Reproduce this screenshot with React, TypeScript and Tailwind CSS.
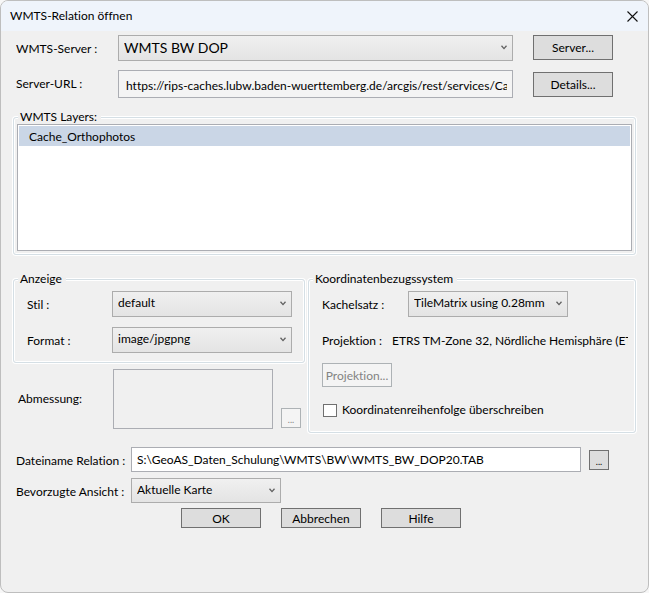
import { useState, type ReactNode } from "react";
import { twMerge } from "tailwind-merge";

type SelectBoxProps = {
  id: string;
  options: string[];
  className?: string;
  selectClassName?: string;
};

function SelectBox({ id, options, className, selectClassName }: SelectBoxProps) {
  return (
    <div className={twMerge("relative h-[26px]", className)}>
      <select
        id={id}
        className={twMerge(
          "block h-full w-full appearance-none border border-[#acacac] bg-linear-to-b from-[#f0f0f0] to-[#e4e4e4] pr-4 pb-[2px] pl-[5px] outline-none",
          selectClassName
        )}
      >
        {options.map((option) => (
          <option key={option}>{option}</option>
        ))}
      </select>
      <svg
        viewBox="0 0 6 5"
        className="pointer-events-none absolute top-[10px] right-[6px] h-[5px] w-[6px]"
        fill="none"
        stroke="#606060"
        strokeWidth="1.3"
      >
        <path d="M0.5 0.8 L3 3.6 L5.5 0.8" />
      </svg>
    </div>
  );
}

type ButtonProps = {
  children: ReactNode;
  className?: string;
  disabled?: boolean;
  label?: string;
};

function Button({ children, className, disabled, label }: ButtonProps) {
  return (
    <button
      type="button"
      disabled={disabled}
      aria-label={label}
      className={twMerge(
        "h-[25px] w-20 shrink-0 border border-[#707070] bg-[#dddddd] pt-px hover:bg-[#bee6fd] disabled:border-[#adb2b5] disabled:bg-[#f4f4f4] disabled:text-[#838383]",
        className
      )}
    >
      {children}
    </button>
  );
}

type GroupBoxProps = {
  title: string;
  className?: string;
  bodyClassName?: string;
  children: ReactNode;
};

function GroupBox({ title, className, bodyClassName, children }: GroupBoxProps) {
  return (
    <fieldset
      className={twMerge(
        "min-w-0 rounded-[3px] border border-[#d5dfe5] shadow-[0_0_0_1px_#fff,inset_0_0_0_1px_#fff]",
        className
      )}
    >
      <legend className="ml-1 bg-[#f0f0f0] pr-1 pl-[2px] leading-[14px]">{title}</legend>
      <div className={bodyClassName}>{children}</div>
    </fieldset>
  );
}

const layers = ["Cache_Orthophotos"];

function App() {
  const [selectedLayer, setSelectedLayer] = useState(layers[0]);
  const [overrideOrder, setOverrideOrder] = useState(false);

  return (
    <div className="min-h-screen bg-[#f7f7f7] font-['Lato','Open_Sans',sans-serif] text-[12px] leading-4 text-black [font-variant-ligatures:none]">
      <main className="min-h-screen overflow-hidden rounded-lg border border-[#bebebe] bg-[#f0f0f0]">
        <header className="flex h-[30px] items-center justify-between bg-[#eff4fb] pr-[10px] pl-[9px]">
          <h1>WMTS-Relation öffnen</h1>
          <button type="button" aria-label="Schließen">
            <svg viewBox="0 0 11 11" className="h-[11px] w-[11px]" fill="none" stroke="#111" strokeWidth="1.1">
              <path d="M0.5 0.5 L10.5 10.5 M10.5 0.5 L0.5 10.5" />
            </svg>
          </button>
        </header>

        <section className="flex flex-col gap-[9px] pt-1 pr-[35px] pl-[15px]">
          <div className="flex items-start">
            <label htmlFor="server" className="w-[102px] pt-[6px]">
              WMTS-Server :
            </label>
            <SelectBox id="server" options={["WMTS BW DOP"]} className="flex-1" selectClassName="pb-0 text-[14px]" />
            <Button className="ml-5">Server...</Button>
          </div>
          <div className="flex items-center">
            <label htmlFor="url" className="w-[102px]">
              Server-URL :
            </label>
            <input
              id="url"
              type="text"
              readOnly
              className="h-7 min-w-0 flex-1 border border-[#abadb3] bg-[#f4f4f4] pt-[2px] pr-[5px] pl-[7px] outline-none"
              defaultValue="https://rips-caches.lubw.baden-wuerttemberg.de/arcgis/rest/services/Cache_Orthophotos"
            />
            <Button className="ml-5">Details...</Button>
          </div>
        </section>

        <GroupBox title="WMTS Layers:" className="mx-3 mt-3" bodyClassName="px-[3px] pb-[3px]">
          <ul role="listbox" aria-label="WMTS Layers" className="h-[127px] overflow-auto border border-[#abadb3] bg-white p-px">
            {layers.map((layer) => (
              <li
                key={layer}
                role="option"
                aria-selected={layer === selectedLayer}
                onClick={() => setSelectedLayer(layer)}
                className={twMerge("h-5 pt-[3px] pl-[10px]", layer === selectedLayer && "bg-[#cad6e6]")}
              >
                {layer}
              </li>
            ))}
          </ul>
        </GroupBox>

        <div className="mx-3 mt-[17px] grid grid-cols-[73fr_82fr] gap-[3px]">
          <div>
            <GroupBox title="Anzeige" bodyClassName="flex flex-col gap-[10px] pt-[5px] pr-3 pb-[9px] pl-[13px]">
              <div className="flex items-center">
                <label htmlFor="style" className="w-[85px] pt-[2px]">
                  Stil :
                </label>
                <SelectBox id="style" options={["default"]} className="flex-1" />
              </div>
              <div className="flex items-center">
                <label htmlFor="format" className="w-[85px] pt-[2px]">
                  Format :
                </label>
                <SelectBox id="format" options={["image/jpgpng", "image/png", "image/jpeg"]} className="flex-1" />
              </div>
            </GroupBox>
            <div className="mt-[6px] flex items-center pr-1 pl-[5px]">
              <label htmlFor="dimension" className="w-[95px]">
                Abmessung:
              </label>
              <textarea
                id="dimension"
                disabled
                className="block h-[60px] min-w-0 flex-1 resize-none border border-[#abadb3] bg-[#f0f0f0]"
              />
              <Button disabled label="Abmessung wählen" className="mb-px ml-2 h-5 w-5 self-end pt-1 text-[9px] leading-3">
                ...
              </Button>
            </div>
          </div>

          <GroupBox
            title="Koordinatenbezugssystem"
            bodyClassName="flex flex-col gap-[10px] pt-[5px] pr-[7px] pb-[9px] pl-[13px]"
          >
            <div className="flex items-center">
              <label htmlFor="tileset" className="w-[86px] pt-[2px]">
                Kachelsatz :
              </label>
              <SelectBox id="tileset" options={["TileMatrix using 0.28mm"]} className="w-40" />
            </div>
            <div className="flex h-[26px] items-center pt-[2px]">
              <span className="w-[70px] shrink-0">Projektion :</span>
              <span className="overflow-hidden whitespace-nowrap">ETRS TM-Zone 32, Nördliche Hemisphäre (ETRS89)</span>
            </div>
            <Button disabled className="h-6 w-[70px]">
              Projektion...
            </Button>
            <label className="flex h-[26px] items-center gap-[5px] pl-px">
              <input
                type="checkbox"
                checked={overrideOrder}
                onChange={(event) => setOverrideOrder(event.target.checked)}
                className="h-[13px] w-[14px] appearance-none border border-[#707070] bg-white checked:bg-[#707070]"
              />
              Koordinatenreihenfolge überschreiben
            </label>
          </GroupBox>
        </div>

        <section className="mt-[14px] flex flex-col gap-[6px] pr-[39px] pl-[15px]">
          <div className="flex items-center">
            <label htmlFor="filename" className="w-[115px] pt-[2px] whitespace-nowrap">
              Dateiname Relation :
            </label>
            <input
              id="filename"
              type="text"
              className="h-[25px] min-w-0 flex-1 border border-[#abadb3] bg-white px-[5px] outline-none"
              defaultValue="S:\GeoAS_Daten_Schulung\WMTS\BW\WMTS_BW_DOP20.TAB"
            />
            <Button label="Datei wählen" className="ml-2 h-5 w-5 pt-1 text-[9px] leading-3">
              ...
            </Button>
          </div>
          <div className="flex items-center">
            <label htmlFor="view" className="w-[115px] pt-[2px] whitespace-nowrap">
              Bevorzugte Ansicht :
            </label>
            <SelectBox id="view" options={["Aktuelle Karte", "Neue Karte"]} className="h-[25px] w-[150px]" />
          </div>
        </section>

        <footer className="mt-[5px] flex justify-center gap-5 pr-[7px]">
          <Button className="h-5">OK</Button>
          <Button className="h-5">Abbrechen</Button>
          <Button className="h-5">Hilfe</Button>
        </footer>
      </main>
    </div>
  );
}

export default App;
